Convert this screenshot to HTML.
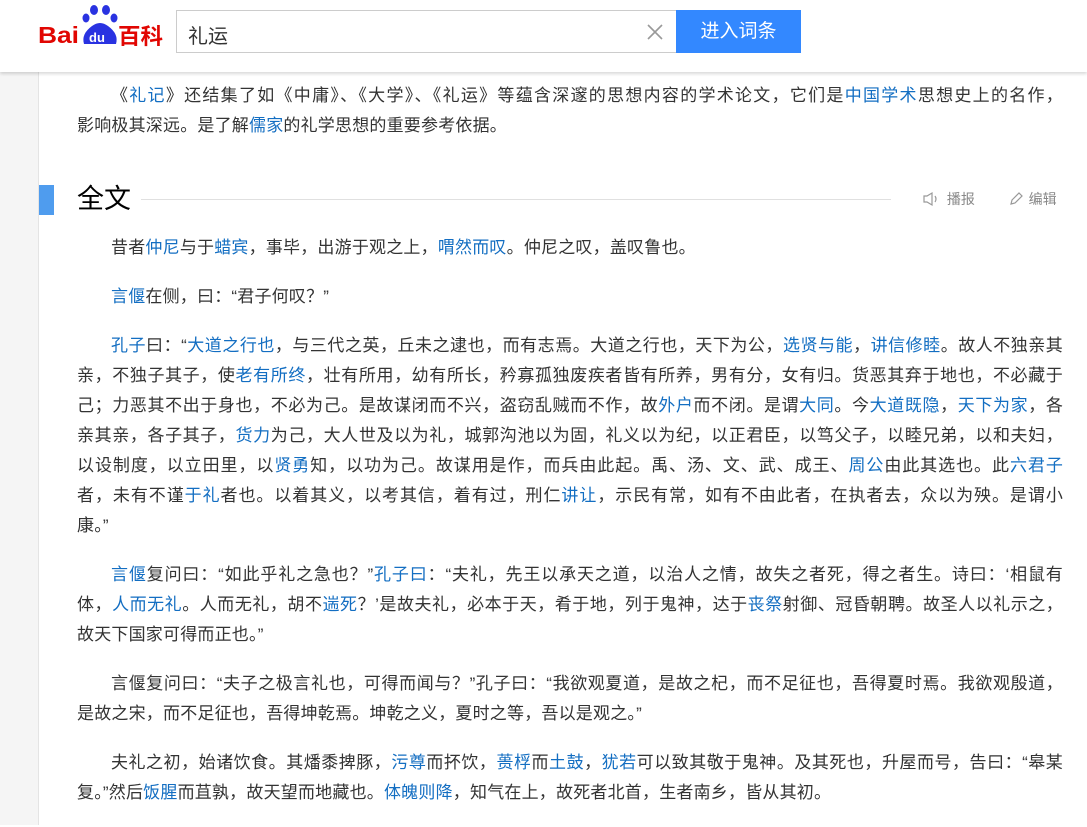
<!DOCTYPE html>
<html><head><meta charset="utf-8"><style>
*{margin:0;padding:0;box-sizing:border-box}
body{width:1087px;height:825px;overflow:hidden;background:#fff;font-family:"Liberation Sans","Noto Sans CJK SC",sans-serif;position:relative}
.side{position:absolute;left:0;top:0;width:39px;height:825px;background:#f5f5f5;border-right:1px solid #e4e4e4}
.hdr{position:absolute;left:0;top:0;width:1087px;height:72px;background:#fff;box-shadow:0 2px 3px rgba(0,0,0,.15);z-index:2}
.logo{position:absolute;left:38px;top:4px;width:130px;height:48px}
.search{position:absolute;left:176px;top:10px;width:501px;height:43px;border:1px solid #ccc;font-size:20px;color:#333;padding:9px 0 0 11px}
.x{position:absolute;left:645px;top:22px;width:20px;height:20px}
.btn{position:absolute;left:676px;top:10px;width:125px;height:43px;background:#3388ff;color:#fff;font-size:19px;text-align:center;line-height:43px}
.c{position:absolute;left:77px;width:986px;font-size:17px;letter-spacing:0.2px;line-height:30px;color:#333}
.c p{margin-bottom:19px}
.c p span{display:block;white-space:nowrap;text-align:justify;text-align-last:justify}
.c p span.e{text-align-last:left}
.c p span.i{padding-left:34px}
a{color:#136ec2;text-decoration:none}
.bar{position:absolute;left:39px;top:185px;width:15px;height:30px;background:#4f9cee}
.ttl{position:absolute;left:77px;top:181px;font-size:27px;color:#000;line-height:36px}
.line{position:absolute;left:141px;top:199px;width:750px;height:1px;background:#e0e0e0}
.tools{position:absolute;left:921px;top:189px;font-size:14px;color:#888;line-height:20px}
</style></head><body>
<div class="side"></div>
<div class="hdr">
<svg class="logo" viewBox="0 0 130 48">
<text x="0" y="39" font-family="Liberation Sans" font-weight="bold" font-size="23" fill="#e10602" textLength="41" lengthAdjust="spacingAndGlyphs">Bai</text>
<ellipse cx="48" cy="14" rx="3.5" ry="4.5" fill="#2932e1"/><ellipse cx="56" cy="6" rx="4" ry="5" fill="#2932e1"/><ellipse cx="68" cy="6" rx="4" ry="5" fill="#2932e1"/><ellipse cx="76" cy="14" rx="3.5" ry="4.5" fill="#2932e1"/>
<path d="M46 40 Q43 30 54 22 Q62 16 70 22 Q81 30 78 40 Z" fill="#2932e1"/>
<text x="51" y="38" font-family="Liberation Sans" font-weight="bold" font-size="13" fill="#fff">du</text>
<text x="80" y="40" font-family="Noto Sans CJK SC" font-weight="bold" font-size="22" fill="#e10602" textLength="45" lengthAdjust="spacingAndGlyphs">百科</text>
</svg>
<div class="search">礼运</div>
<svg class="x" viewBox="0 0 20 20"><path d="M3 3L17 17M17 3L3 17" stroke="#999" stroke-width="1.6"/></svg>
<div class="btn">进入词条</div>
</div>
<div class="c" style="top:81px"><p><span class="i">《<a>礼记</a>》还结集了如《中庸》、《大学》、《礼运》等蕴含深邃的思想内容的学术论文，它们是<a>中国学术</a>思想史上的名作，</span><span class="e">影响极其深远。是了解<a>儒家</a>的礼学思想的重要参考依据。</span></p></div>
<div class="bar"></div><div class="ttl">全文</div><div class="line"></div>
<div class="tools"><svg width="22" height="16" viewBox="0 0 20 16" style="vertical-align:-3px"><path d="M2 5h3l5-3v12l-5-3H2z" fill="none" stroke="#999" stroke-width="1.2"/><path d="M13 5q2 3 0 6" fill="none" stroke="#999" stroke-width="1.2"/></svg> 播报 <span style="display:inline-block;width:28px"></span><svg width="18" height="16" viewBox="0 0 16 16" style="vertical-align:-3px"><path d="M3 13l1-4 7-7 3 3-7 7z" fill="none" stroke="#999" stroke-width="1.2"/></svg> 编辑</div>
<div class="c" style="top:233px">
<p><span class="i e">昔者<a>仲尼</a>与于<a>蜡宾</a>，事毕，出游于观之上，<a>喟然而叹</a>。仲尼之叹，盖叹鲁也。</span></p>
<p><span class="i e"><a>言偃</a>在侧，曰：“君子何叹？”</span></p>
<p><span class="i"><a>孔子</a>曰：“<a>大道之行也</a>，与三代之英，丘未之逮也，而有志焉。大道之行也，天下为公，<a>选贤与能</a>，<a>讲信修睦</a>。故人不独亲其</span><span>亲，不独子其子，使<a>老有所终</a>，壮有所用，幼有所长，矜寡孤独废疾者皆有所养，男有分，女有归。货恶其弃于地也，不必藏于</span><span>己；力恶其不出于身也，不必为己。是故谋闭而不兴，盗窃乱贼而不作，故<a>外户</a>而不闭。是谓<a>大同</a>。今<a>大道既隐</a>，<a>天下为家</a>，各</span><span>亲其亲，各子其子，<a>货力</a>为己，大人世及以为礼，城郭沟池以为固，礼义以为纪，以正君臣，以笃父子，以睦兄弟，以和夫妇，</span><span>以设制度，以立田里，以<a>贤勇</a>知，以功为己。故谋用是作，而兵由此起。禹、汤、文、武、成王、<a>周公</a>由此其选也。此<a>六君子</a></span><span>者，未有不谨<a>于礼</a>者也。以着其义，以考其信，着有过，刑仁<a>讲让</a>，示民有常，如有不由此者，在执者去，众以为殃。是谓小</span><span class="e">康。”</span></p>
<p><span class="i"><a>言偃</a>复问曰：“如此乎礼之急也？”<a>孔子曰</a>：“夫礼，先王以承天之道，以治人之情，故失之者死，得之者生。诗曰：‘相鼠有</span><span>体，<a>人而无礼</a>。人而无礼，胡不<a>遄死</a>？’是故夫礼，必本于天，肴于地，列于鬼神，达于<a>丧祭</a>射御、冠昏朝聘。故圣人以礼示之，</span><span class="e">故天下国家可得而正也。”</span></p>
<p><span class="i">言偃复问曰：“夫子之极言礼也，可得而闻与？”孔子曰：“我欲观夏道，是故之杞，而不足征也，吾得夏时焉。我欲观殷道，</span><span class="e">是故之宋，而不足征也，吾得坤乾焉。坤乾之义，夏时之等，吾以是观之。”</span></p>
<p><span class="i">夫礼之初，始诸饮食。其燔黍捭豚，<a>污尊</a>而抔饮，<a>蒉桴</a>而<a>土鼓</a>，<a>犹若</a>可以致其敬于鬼神。及其死也，升屋而号，告曰：“皋某</span><span class="e">复。”然后<a>饭腥</a>而苴孰，故天望而地藏也。<a>体魄则降</a>，知气在上，故死者北首，生者南乡，皆从其初。</span></p>
</div>
</body></html>
